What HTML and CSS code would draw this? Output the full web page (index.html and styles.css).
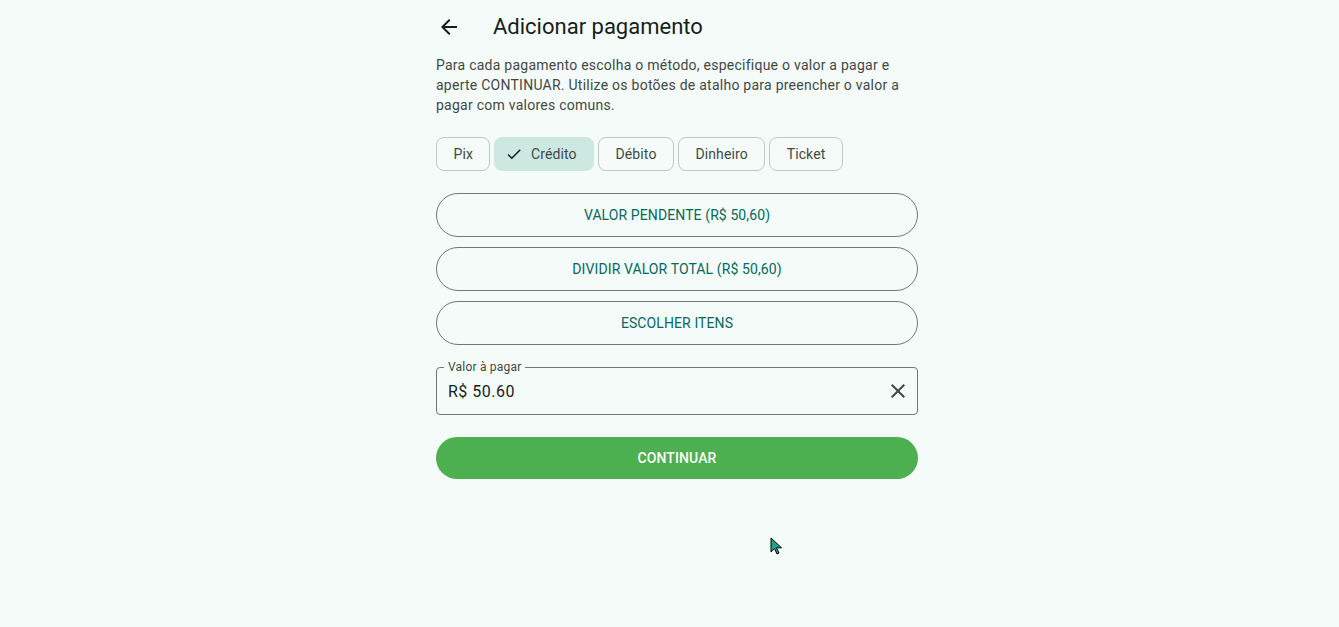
FILE: index.html
```html
<!DOCTYPE html>
<html lang="pt-BR">
<head>
<meta charset="utf-8">
<title>Adicionar pagamento</title>
<link rel="stylesheet" href="styles.css">
</head>
<body>
<main class="page">
  <header class="topbar">
    <button class="icon-btn back" aria-label="Voltar">
      <svg viewBox="0 0 24 24" width="24" height="24"><path d="M20 11H7.83l5.59-5.59L12 4l-8 8 8 8 1.41-1.41L7.83 13H20v-2z" fill="currentColor"/></svg>
    </button>
    <h1 class="title">Adicionar pagamento</h1>
  </header>

  <p class="desc">Para cada pagamento escolha o método, especifique o valor a pagar e aperte CONTINUAR. Utilize os botões de atalho para preencher o valor a pagar com valores comuns.</p>

  <div class="chips">
    <button class="chip">Pix</button>
    <button class="chip selected">
      <svg class="check" viewBox="0 0 24 24" width="18" height="18"><path d="M9 16.17 4.83 12l-1.42 1.41L9 19 21 7l-1.41-1.41z" fill="currentColor"/></svg>
      Crédito
    </button>
    <button class="chip">Débito</button>
    <button class="chip">Dinheiro</button>
    <button class="chip">Ticket</button>
  </div>

  <div class="shortcuts">
    <button class="outlined">VALOR PENDENTE (R$ 50,60)</button>
    <button class="outlined">DIVIDIR VALOR TOTAL (R$ 50,60)</button>
    <button class="outlined">ESCOLHER ITENS</button>
  </div>

  <div class="field">
    <span class="field-label">Valor à pagar</span>
    <span class="field-value">R$ 50.60</span>
    <button class="icon-btn clear" aria-label="Limpar">
      <svg viewBox="0 0 24 24" width="24" height="24"><path d="M19 6.41 17.59 5 12 10.59 6.41 5 5 6.41 10.59 12 5 17.59 6.41 19 12 13.41 17.59 19 19 17.59 13.41 12z" fill="currentColor"/></svg>
    </button>
  </div>

  <button class="primary">CONTINUAR</button>
</main>
<svg class="cursor" viewBox="0 0 14 20" width="14" height="20"><path d="M1 1 L1 15 L4.5 11.5 L7 17 L9 16 L6.5 10.8 L11.5 10.8 Z" fill="#1fa38a" stroke="#000" stroke-width="1"/></svg>
</body>
</html>
```

FILE: styles.css
```css
* { box-sizing: border-box; }
html, body { margin: 0; padding: 0; }
body {
  background: #f5fbf8;
  font-family: Roboto, "Noto Sans", Arial, sans-serif;
  color: #171d1b;
  display: flex;
  justify-content: center;
  padding-left: 15px;
  min-height: 627px;
}
.page {
  width: 482px;
  display: flex;
  flex-direction: column;
}
button { font-family: inherit; cursor: pointer; }
.topbar {
  display: flex;
  align-items: center;
  height: 54px;
}
.icon-btn {
  border: 0;
  background: none;
  padding: 0;
  display: flex;
  align-items: center;
  justify-content: center;
  color: #171d1b;
}
.back { width: 24px; height: 24px; margin-left: 1px; }
.title {
  margin: 0 0 0 32px;
  font-size: 22px;
  font-weight: 400;
  line-height: 28px;
  color: #171d1b;
}
.desc {
  margin: 0;
  padding-top: 1px;
  font-size: 14px;
  line-height: 20px;
  letter-spacing: 0.25px;
  color: #3f4946;
}
.chips {
  display: flex;
  gap: 4px;
  margin-top: 22px;
}
.chip {
  height: 34px;
  border: 1px solid #bfc9c4;
  border-radius: 8px;
  background: transparent;
  padding: 0 16.5px;
  font-size: 14px;
  font-weight: 400;
  letter-spacing: 0.1px;
  color: #3f4946;
  display: flex;
  align-items: center;
  gap: 8px;
}
.chip.selected {
  background: #cde8e1;
  border-color: #cde8e1;
  padding-left: 9.5px;
}
.check { color: #171d1b; }
.shortcuts {
  display: flex;
  flex-direction: column;
  gap: 10px;
  margin-top: 22px;
}
.outlined {
  height: 44px;
  border: 1px solid #6f7975;
  border-radius: 22px;
  background: transparent;
  font-size: 14px;
  font-weight: 400;
  letter-spacing: 0.1px;
  color: #006a60;
}
.field {
  margin-top: 22px;
  height: 48px;
  border: 1px solid #6f7975;
  border-radius: 4px;
  padding: 0 7px 0 11px;
  display: flex;
  align-items: center;
  position: relative;
}
.field-label {
  position: absolute;
  left: 7px;
  top: -9px;
  font-size: 12px;
  line-height: 16px;
  color: #3f4946;
  padding: 0 4px;
  background: #f5fbf8;
  letter-spacing: 0.2px;
}
.field-value {
  flex: 1;
  font-size: 16px;
  letter-spacing: 0.5px;
  color: #171d1b;
}
.clear { width: 24px; height: 24px; color: #3f4946; }
.primary {
  margin-top: 22px;
  height: 42px;
  border: 0;
  border-radius: 21px;
  background: #4caf50;
  color: #ffffff;
  font-size: 14px;
  font-weight: 500;
  letter-spacing: 0.1px;
}
.cursor {
  position: absolute;
  left: 770px;
  top: 537px;
}
```
